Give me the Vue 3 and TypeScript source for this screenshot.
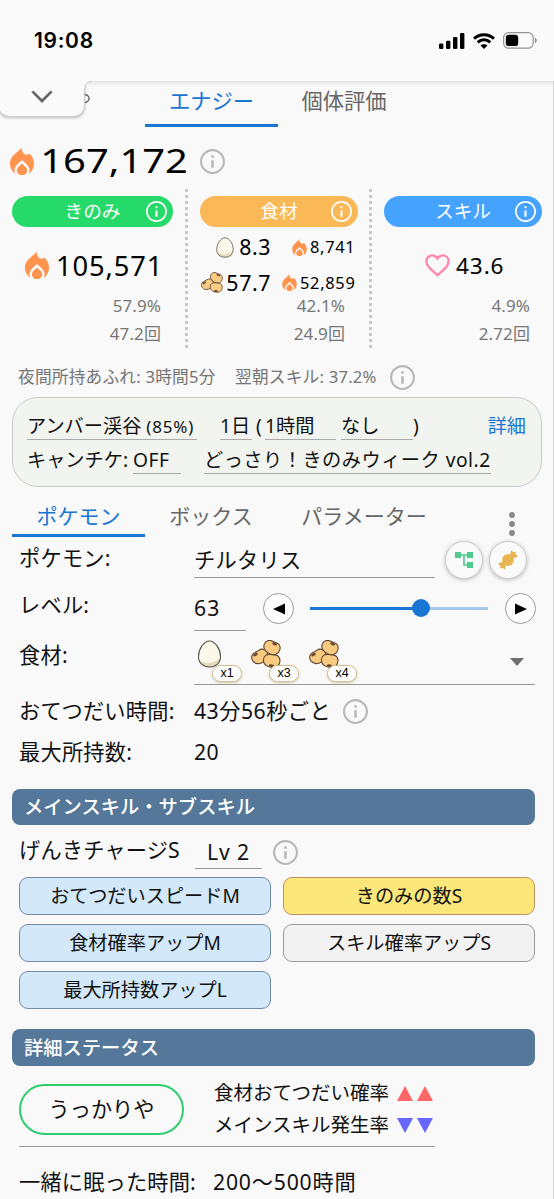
<script setup lang="ts">
import { defineComponent, h } from 'vue'

interface Chip { label: string; tone: 'blue' | 'gold' | 'plain' }

const chips: Chip[] = [
  { label: 'おてつだいスピードM', tone: 'blue' },
  { label: 'きのみの数S', tone: 'gold' },
  { label: '食材確率アップM', tone: 'blue' },
  { label: 'スキル確率アップS', tone: 'plain' },
  { label: '最大所持数アップL', tone: 'blue' },
]

const level = 63
const sliderPercent = 62.6

const InfoIcon = defineComponent({
  setup: () => () =>
    h('svg', { viewBox: '2 2 20 20' }, [
      h('path', {
        fill: 'currentColor',
        d: 'M11 7h2v2h-2zm0 4h2v6h-2zm1-9C6.48 2 2 6.48 2 12s4.48 10 10 10 10-4.48 10-10S17.52 2 12 2zm0 18.3c-4.58 0-8.3-3.72-8.3-8.3S7.42 3.7 12 3.7s8.3 3.72 8.3 8.3-3.72 8.3-8.3 8.3z',
      }),
    ]),
})

const Flame = defineComponent({
  setup: () => () =>
    h('svg', { viewBox: '0 0 24 28' }, [
      h('path', {
        fill: '#ff944d',
        d: 'M11.5 0.5C11.6 4 13.4 7.5 16.2 7.8C17.8 7.9 18.6 7.4 18.7 6.2C22 8.7 24 12.4 24 16.4C24 21.1 21.8 24.9 18.4 27C19.6 25.3 19.9 23 19.2 21C18.2 18.2 15 16 12 13C9 16 5.8 18.2 4.8 21C4.1 23 4.4 25.3 5.6 27C2.2 24.9 0 21.1 0 16.6C0 11.3 3.2 8.2 6.8 5.2C8.8 3.6 10.5 2.2 11.5 0.5Z',
      }),
      h('path', { fill: '#ff944d', d: 'M12 16.6L15.9 20.2A5 5 0 1 1 8.1 20.2Z' }),
    ]),
})

const Egg = defineComponent({
  setup: () => () =>
    h('svg', { viewBox: '0 0 24 28' }, [
      h('path', { fill: '#fbf8ea', d: 'M12 1C17.5 1 23 9 23 16.5C23 23 18.5 27 12 27S1 23 1 16.5C1 9 6.5 1 12 1Z' }),
      h('path', { fill: '#e6dcbc', d: 'M1.8 20C8 24.5 17 24 22.6 17.5C22.6 23.5 18 27 12 27C7 27 3 24.7 1.8 20Z' }),
      h('path', { fill: 'none', stroke: '#5c564d', 'stroke-width': '1.1', d: 'M12 1C17.5 1 23 9 23 16.5C23 23 18.5 27 12 27S1 23 1 16.5C1 9 6.5 1 12 1Z' }),
    ]),
})

const bean = (x: number, y: number, turn: number, spotX: number, spotY: number) =>
  h('g', { transform: `translate(${x} ${y}) rotate(${turn})` }, [
    h('path', {
      fill: '#f9cb80', stroke: '#5e4635', 'stroke-width': '1.1',
      d: 'M-8.2 0C-8.4-4.4-5-6.6-1.2-6C1.6-5.5 3-6.4 5.4-5.4C9-3.6 9.4 2.4 6.4 5C2.8 8-7.6 7.2-8.2 0Z',
    }),
    h('ellipse', { cx: spotX, cy: spotY, rx: 2.6, ry: 1.3, fill: '#6b4637' }),
  ])

const Beans = defineComponent({
  setup: () => () =>
    h('svg', { viewBox: '0 0 30 28' }, [
      bean(20.8, 7.4, 20, 1.5, -4.2),
      bean(8.8, 16.6, -32, -2.5, -4),
      bean(20.6, 20.6, 3, 0, 5),
    ]),
})

const ingredients = [
  { icon: Egg, count: 'x1' },
  { icon: Beans, count: 'x3' },
  { icon: Beans, count: 'x4' },
]
</script>

<template>
  <div class="screen">
    <header class="status">
      <span class="clock">19:08</span>
      <div class="signals">
        <svg class="bars" viewBox="0 0 26 16">
          <rect x="0" y="10.5" width="4.4" height="5.5" rx="1.3" />
          <rect x="7" y="7.8" width="4.4" height="8.2" rx="1.3" />
          <rect x="14" y="4" width="4.4" height="12" rx="1.3" />
          <rect x="21" y="0" width="4.4" height="16" rx="1.3" />
        </svg>
        <svg class="wifi" viewBox="0 0 22 16">
          <g fill="none" stroke="#000" stroke-width="3">
            <path d="M1 5.6C6.6.3 15.4.3 21 5.6" />
            <path d="M4.7 9.3C8.3 6 13.7 6 17.3 9.3" />
          </g>
          <path d="M11 16L7.5 12.5C9.4 10.8 12.6 10.8 14.5 12.5Z" />
        </svg>
        <svg class="battery" viewBox="0 0 34 17">
          <rect x=".6" y=".6" width="29.6" height="15.6" rx="5" fill="none" stroke="#929292" stroke-width="1.2" />
          <rect x="2.8" y="2.7" width="12.4" height="11.4" rx="3.2" />
          <path d="M31.8 5.6C34.4 6.5 34.4 10.3 31.8 11.2Z" fill="#929292" />
        </svg>
      </div>
    </header>

    <main class="page">
      <nav class="top-tabs">
        <span class="tab active">エナジー</span>
        <span class="tab">個体評価</span>
        <svg class="peek" viewBox="0 0 8 12"><path d="M0 1.5C8 .5 8 10.5 0 9.5" fill="none" stroke="#666" stroke-width="1.4" /></svg>
        <button class="drawer">
          <svg viewBox="0 0 22 13"><path d="M1.4 1.4L11 11L20.6 1.4" fill="none" stroke="#666" stroke-width="2.7" /></svg>
        </button>
        <svg class="notch" viewBox="0 0 8 8"><path d="M0 0H8V.5C3 .5 1 3 .8 8H0Z" fill="#fafafa" /><path d="M8 .5C3 .5 1 3 .8 8" fill="none" stroke="#ccc" /></svg>
      </nav>

      <section class="total">
        <Flame class="flame" />
        <span class="total-value">167,172</span>
        <InfoIcon class="info" />
      </section>

      <section class="columns">
        <article class="column">
          <h3 class="pill green">きのみ<InfoIcon class="pill-info" /></h3>
          <div class="single berry"><Flame class="flame" /><span>105,571</span></div>
          <p class="rate">57.9%</p>
          <p class="rate">47.2回</p>
        </article>
        <article class="column middle">
          <h3 class="pill orange">食材<InfoIcon class="pill-info" /></h3>
          <div class="foods">
            <Egg class="small-egg" /><b>8.3</b><Flame class="mini-flame first" /><small>8,741</small>
            <Beans class="small-beans" /><b>57.7</b><Flame class="mini-flame" /><small>52,859</small>
          </div>
          <p class="rate">42.1%</p>
          <p class="rate">24.9回</p>
        </article>
        <article class="column">
          <h3 class="pill blue">スキル<InfoIcon class="pill-info" /></h3>
          <div class="single skill">
            <svg class="heart" viewBox="0 0 25 23"><path d="M12.5 21.2C4.5 14.4 1.4 11.5 1.4 7.3C1.4 3.8 4 1.4 7.1 1.4C9.2 1.4 11.3 2.5 12.5 4.5C13.7 2.5 15.8 1.4 17.9 1.4C21 1.4 23.6 3.8 23.6 7.3C23.6 11.5 20.5 14.4 12.5 21.2Z" fill="none" stroke="#ff87b2" stroke-width="2.4" /></svg>
            <span>43.6</span>
          </div>
          <p class="rate">4.9%</p>
          <p class="rate">2.72回</p>
        </article>
      </section>

      <section class="night">
        <span class="night-a">夜間所持あふれ: 3時間5分</span>
        <span class="night-b">翌朝スキル: 37.2%</span>
        <InfoIcon class="info" />
      </section>

      <section class="settings">
        <div class="setting-row">
          <span class="field area">アンバー渓谷 <small>(85%)</small></span>
          <span class="field day">1日</span>
          <span class="paren">(</span>
          <span class="field hour">1時間</span>
          <span class="field none">なし</span>
          <span class="close">)</span>
          <a class="detail">詳細</a>
        </div>
        <div class="setting-row">
          <span class="ticket">キャンチケ:</span>
          <span class="field off">OFF</span>
          <span class="field event">どっさり！きのみウィーク vol.2</span>
        </div>
      </section>

      <nav class="sub-tabs">
        <span class="tab active">ポケモン</span>
        <span class="tab box">ボックス</span>
        <span class="tab params">パラメーター</span>
        <svg class="more" viewBox="0 0 6 24"><circle cx="3" cy="3" r="2.9" /><circle cx="3" cy="12" r="2.9" /><circle cx="3" cy="21" r="2.9" /></svg>
      </nav>

      <section class="form">
        <div class="row pokemon">
          <label>ポケモン:</label>
          <span class="input name">チルタリス</span>
          <button class="round">
            <svg class="tree" viewBox="0 0 18 16" fill="#4fca8e"><path d="M0 0H6V6H0Z M12 0H18V6H12Z M12 10H18V16H12Z" /><path d="M6 3H12M9 3V13H12" fill="none" stroke="#4fca8e" stroke-width="1.7" /></svg>
          </button>
          <button class="round">
            <svg class="candy" viewBox="0 0 20 20" fill="#e7b653"><circle cx="10" cy="10" r="5.9" /><path d="M12 5.6L13 .2L15.6 2.2L17.8 1.6L17.6 4L20 6.6L14.6 8.4Z M8 14.4L7 19.8L4.4 17.8L2.2 18.4L2.4 16L0 13.4L5.4 11.6Z" /></svg>
          </button>
        </div>
        <div class="row level">
          <label>レベル:</label>
          <span class="input number">{{ level }}</span>
          <button class="step"><svg viewBox="0 0 12 12"><path d="M12 .5V11.5L0 6Z" /></svg></button>
          <div class="slider">
            <div class="slider-fill" :style="{ width: sliderPercent + '%' }"><i class="thumb"></i></div>
          </div>
          <button class="step"><svg viewBox="0 0 12 12"><path d="M0 .5V11.5L12 6Z" /></svg></button>
        </div>
        <div class="row food">
          <label>食材:</label>
          <div class="select">
            <div v-for="(item, i) in ingredients" :key="i" class="ingredient">
              <component :is="item.icon" class="ingredient-icon" />
              <span class="badge">{{ item.count }}</span>
            </div>
            <svg class="caret" viewBox="0 0 14 8"><path d="M0 0H14L7 8Z" fill="#6f6f6f" /></svg>
          </div>
        </div>
        <div class="row time">
          <label>おてつだい時間:</label>
          <span class="value">43分56秒ごと</span>
          <InfoIcon class="info" />
        </div>
        <div class="row carry">
          <label>最大所持数:</label>
          <span class="value">20</span>
        </div>
      </section>

      <h2 class="heading">メインスキル・サブスキル</h2>
      <div class="main-skill">
        <span class="skill-name">げんきチャージS</span>
        <span class="input skill-level">Lv 2</span>
        <InfoIcon class="info" />
      </div>
      <div class="chips">
        <span v-for="chip in chips" :key="chip.label" class="chip" :class="chip.tone">{{ chip.label }}</span>
      </div>

      <h2 class="heading second">詳細ステータス</h2>
      <div class="nature">
        <span class="nature-name">うっかりや</span>
        <div class="effects">
          <div class="effect">食材おてつだい確率
            <svg viewBox="0 0 36 15" fill="#ff6666"><path d="M0 15L8 0L16 15Z M20 15L28 0L36 15Z" /></svg>
          </div>
          <div class="effect">メインスキル発生率
            <svg viewBox="0 0 36 15" fill="#6666ff"><path d="M0 0H16L8 15Z M20 0H36L28 15Z" /></svg>
          </div>
        </div>
      </div>
      <div class="sleep">
        <span class="sleep-label">一緒に眠った時間:</span>
        <span class="sleep-value">200～500時間</span>
      </div>
    </main>
  </div>
</template>

<style>
body { margin: 0; background: #f9f9f9; overflow: hidden; }
</style>

<style scoped>
* { box-sizing: border-box; }
.screen {
  width: 554px; height: 1199px; overflow: hidden; background: #f9f9f9; color: #111;
  font-family: "Noto Sans", "Noto Sans CJK JP", sans-serif; font-size: 21.2px; font-weight: 380; line-height: 30px;
}
svg { display: block; flex: none; }
p, h2, h3 { margin: 0; font-weight: 380; }
button { padding: 0; flex: none; display: flex; align-items: center; justify-content: center; }
span, label { white-space: nowrap; }

.status { height: 81px; display: flex; justify-content: space-between; padding: 0 17px 0 34px; background: #fafafa; }
.clock { font: 600 21px/82px Inter, sans-serif; color: #000; letter-spacing: .7px; }
.signals { display: flex; align-items: center; gap: 8px; height: 81px; }
.bars { width: 26px; height: 16px; }
.wifi { width: 22px; height: 16px; }
.battery { width: 34px; height: 17px; }

.page { height: 1118px; border-right: 1px solid #d4d4d4; background: linear-gradient(#dedede, #eee 2px, #f9f9f9 6px); }
.top-tabs { position: relative; height: 46px; display: flex; padding-left: 145px; }
.tab { color: #666; text-align: center; }
.tab.active { color: #1976d2; border-bottom: 3px solid #1976d2; }
.top-tabs .tab { width: 132px; line-height: 40px; font-size: 21.3px; }
.top-tabs .tab.active { width: 133px; }
.drawer {
  position: absolute; left: -2px; top: -4px; width: 87px; height: 40px; padding-bottom: 1px;
  border: 1px solid #ccc; border-top: 0; border-radius: 0 0 11px 11px; background: #fafafa;
  box-shadow: 0 1px 3px rgba(0, 0, 0, .24); clip-path: inset(4px -5px -5px -5px);
}
.drawer svg { width: 22px; height: 13px; }
.notch { position: absolute; left: 84px; top: 0; width: 8px; height: 8px; }
.peek { position: absolute; left: 83px; top: 12px; width: 8px; height: 12px; }

.info { width: 25px; height: 25px; color: #b8b8b8; }
.flame { width: 24px; height: 28px; }
.total { height: 62px; margin-top: 3px; padding-left: 10px; display: flex; align-items: center; }
.total-value { width: 159px; padding-left: 6px; font-size: 33px; font-weight: 420; color: #000; transform: scaleX(1.21); transform-origin: 5px 50%; margin-right: 7px; }

.columns { height: 159px; margin: -3px 11px 0 12px; display: grid; grid-template-columns: 161px 211px 158px; }
.column.middle { padding: 0 11px 0 12px; margin: 0 12px 0 12px; border: dotted #c8c8c8; border-width: 0 3px; }
.pill { position: relative; height: 31px; margin-top: 7px; border-radius: 16px; color: #fff; font-size: 18.7px; line-height: 30px; text-align: center; }
.green { background: #25da69; }
.orange { background: #fbb856; }
.blue { background: #45a2ff; }
.pill-info { position: absolute; right: 6px; top: 5px; width: 21px; height: 21px; }
.single { height: 66px; margin-top: 5px; display: flex; align-items: center; color: #000; font-weight: 450; }
.berry { padding-left: 13px; font-size: 27.3px; }
.berry span { margin-left: 7px; padding-top: 2px; letter-spacing: .9px; }
.skill { padding-left: 41px; font-size: 22.6px; }
.heart { width: 25px; height: 23px; }
.skill span { margin-left: 6px; padding-top: 2px; letter-spacing: .9px; }
.rate { height: 28px; line-height: 28px; padding-right: 12px; text-align: right; font-size: 17px; letter-spacing: .1px; color: #777; }
.middle .rate { padding-right: 13px; }
.rate:first-of-type { margin-top: -6px; }
.foods { height: 71px; display: grid; grid-template: 36px 35px / 24px 57px 16px 61px; align-items: center; margin: 2px -3px 0 1px; color: #000; }
.foods + .rate { margin-top: -8px; }
.foods b { font-weight: 450; font-size: 21.3px; text-align: right; padding-right: 11px; letter-spacing: .6px; }
.foods small { font-weight: 450; font-size: 16.4px; padding-left: 2px; letter-spacing: .7px; }
.small-egg { width: 18px; height: 21px; justify-self: end; margin-right: -9px; }
.small-beans { width: 22px; height: 21px; }
.mini-flame { width: 15px; height: 17px; }
.mini-flame.first { margin-left: 10px; }
.mini-flame.first + small { margin-left: 10px; }

.night { height: 50px; padding: 8px 0 0 18px; display: flex; align-items: center; font-size: 16.7px; letter-spacing: .2px; color: #757575; }
.night span { margin-top: -1px; }
.night-a { width: 217px; }
.night-b { width: 155px; }

.settings { height: 90px; margin: -1px 11px 0 12px; padding: 11px 15px 0 14px; border: 1.5px solid #c9cbc8; border-radius: 26px; background: #f2f4f0; font-size: 19.2px; }
.setting-row { height: 34px; display: flex; align-items: flex-start; line-height: 34px; }
.field { height: 31px; border-bottom: 1.3px solid #aaa; }
.area { width: 170px; margin-right: 23px; }
.area small { font-size: 17px; letter-spacing: .8px; }
.day { width: 32px; }
.paren { width: 12px; padding-left: 4px; margin-right: 1px; }
.hour { width: 71px; margin-right: 5px; }
.none { width: 72px; }
.detail { margin-left: auto; color: #1976d2; }
.ticket { width: 106px; }
.off { width: 48px; margin-right: 23px; letter-spacing: .5px; }
.event { width: 287px; letter-spacing: .5px; }

.sub-tabs { height: 43px; margin: 7px 0 0 12px; display: flex; font-size: 21px; }
.sub-tabs .tab { width: 132px; line-height: 44px; }
.sub-tabs .tab.active { width: 133px; }
.sub-tabs .params { width: 174px; }
.more { width: 6px; height: 24px; margin: 18px 0 0 58px; fill: #888; }

.form label { width: 175px; flex: none; letter-spacing: .25px; }
.row { display: flex; padding-left: 19px; }
.input { border-bottom: 1.5px solid #999; }
.pokemon { height: 46px; padding-top: 4px; line-height: 33px; }
.name { width: 241px; height: 37px; line-height: 38px; margin-right: 10px; letter-spacing: .3px; }
.round { width: 38px; height: 38px; border-radius: 50%; border: 1px solid #ccc; background: #fafafa; box-shadow: 0 1px 4px rgba(0, 0, 0, .25); margin-right: 6px; }
.tree { width: 18px; height: 16px; }
.candy { width: 20px; height: 20px; }
.level { height: 49px; padding-top: 3px; line-height: 38px; }
.number { width: 52px; height: 45px; line-height: 43px; letter-spacing: 1.2px; margin-right: 17px; }
.step { width: 31px; height: 31px; margin-top: 7px; border: 1.3px solid #999; border-radius: 50%; background: #fff; }
.step svg { width: 12px; height: 12px; }
.slider { width: 178px; height: 3px; margin: 21px 17px 0 16px; background: #a5c8ec; }
.slider-fill { position: relative; height: 3px; background: #1976d2; }
.thumb { position: absolute; right: -9px; top: -8px; width: 18px; height: 18px; border-radius: 50%; background: #1976d2; }
.food { height: 54px; line-height: 46px; }
.select { width: 341px; height: 49px; margin-top: 4px; padding: 4px 11px 0 1px; display: flex; border-bottom: 1.5px solid #999; }
.ingredient { position: relative; width: 58px; height: 44px; }
.ingredient-icon { width: 30px; height: 28px; }
.ingredient:first-child { width: 56px; }
.ingredient:first-child .ingredient-icon { width: 29px; }
.badge { position: absolute; left: 17px; top: 25px; width: 30px; height: 17px; border: 1.5px solid #cdbf91; border-radius: 9px; background: #fff; font: 500 12.5px/14px "Liberation Sans", sans-serif; text-align: center; box-shadow: 0 1px 3px rgba(150, 130, 60, .4); color: #000; }
.ingredient + .ingredient .badge { left: 18px; }
.caret { width: 14px; height: 8px; margin: 18px 0 0 auto; }
.time { height: 47px; padding-top: 2px; line-height: 46px; }
.value { letter-spacing: .5px; }
.time .info { margin: 11px 0 0 12px; }
.carry { height: 54px; line-height: 38px; }

.heading { width: 523px; height: 36px; margin: 2px 0 0 12px; padding-left: 12px; border-radius: 8px; background: #557799; color: #fff; font-size: 19.3px; font-weight: 450; line-height: 36px; }
.main-skill { height: 52px; padding-left: 19px; display: flex; line-height: 49px; }
.skill-name { width: 176px; letter-spacing: .2px; }
.skill-level { width: 67px; height: 44px; line-height: 54px; text-align: center; margin-right: 11px; letter-spacing: .9px; }
.main-skill .info { margin-top: 15px; }
.chips { display: grid; grid-template-columns: 252px 252px; gap: 9px 12px; padding-left: 19px; }
.chip { height: 38px; border: 1.5px solid; border-radius: 9px; font-size: 19.2px; line-height: 35px; text-align: center; }
.chip.blue { background: #d3e8f8; border-color: #7389aa; }
.chip.gold { background: #fbe67a; border-color: #bd9460; }
.chip.plain { background: #f2f2f2; border-color: #9b9b9b; }

.heading.second { height: 37px; margin-top: 20px; line-height: 37px; }
.nature { width: 416px; height: 81px; margin: 0 0 0 19px; padding-top: 18px; display: flex; border-bottom: 1.5px solid #999; }
.nature-name { width: 165px; height: 51px; border: 2.5px solid #2fcc70; border-radius: 26px; line-height: 46px; text-align: center; margin-right: 30px; flex: none; }
.effects { margin-top: -7px; font-size: 19.5px; }
.effect { height: 32px; line-height: 32px; display: flex; align-items: center; white-space: nowrap; gap: 8px; }
.effect svg { width: 36px; height: 15px; }
.sleep { display: flex; padding-left: 19px; height: 52px; line-height: 69px; }
.sleep-label { width: 194px; letter-spacing: .2px; }
.sleep-value { letter-spacing: .8px; }
</style>
